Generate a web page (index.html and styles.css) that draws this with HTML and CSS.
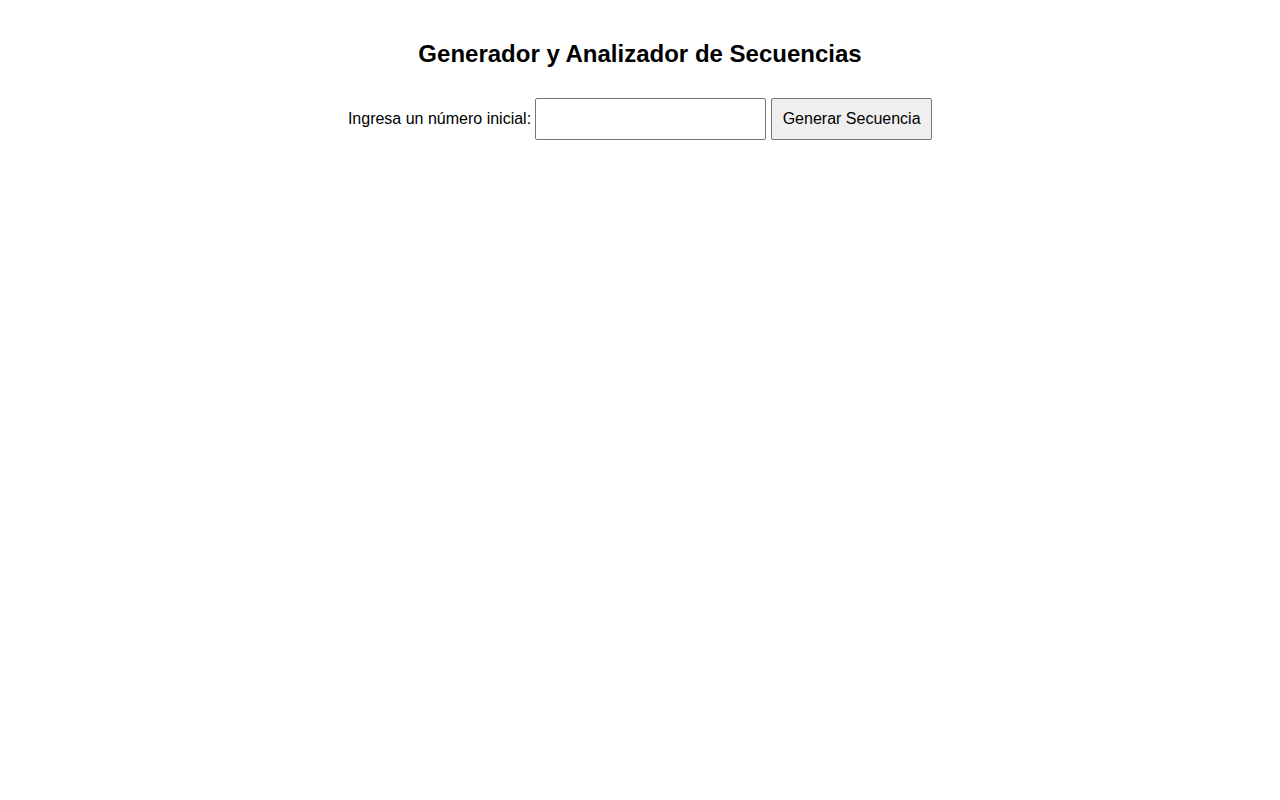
FILE: index.html
```html
<!DOCTYPE html>
<html lang="es">
<head>
<meta charset="utf-8">
<title>Generador y Analizador de Secuencias</title>
<link rel="stylesheet" href="styles.css">
</head>
<body>
<main class="app">
  <h2 class="title">Generador y Analizador de Secuencias</h2>
  <div class="form-row">
    <label class="label" for="num">Ingresa un número inicial:</label>
    <input class="num-input" id="num" type="number">
    <button class="gen-btn" type="button">Generar Secuencia</button>
  </div>
</main>
</body>
</html>
```
FILE: styles.css
```css
html, body {
  margin: 0;
  background: #fff;
}
body {
  font-family: "Liberation Sans", Arial, sans-serif;
  color: #000;
  padding: 20px;
}
.app {
  display: flex;
  flex-direction: column;
  align-items: center;
}
.title {
  font-size: 24px;
  font-weight: bold;
  margin: 20px 0 0;
  line-height: 28px;
}
.form-row {
  margin-top: 30px;
  display: flex;
  align-items: center;
  font-size: 16px;
}
.label {
  margin-right: 4px;
}
.num-input {
  box-sizing: border-box;
  width: 231px;
  height: 42px;
  padding: 10px;
  font-size: 16px;
  font-family: inherit;
  border: 1px solid #767676;
  border-radius: 2px;
  background: #fff;
  margin: 0;
}
.num-input::-webkit-outer-spin-button,
.num-input::-webkit-inner-spin-button {
  -webkit-appearance: none;
  margin: 0;
}
.num-input { -moz-appearance: textfield; }
.gen-btn {
  box-sizing: border-box;
  height: 42px;
  width: 161px;
  margin-left: 5px;
  padding: 0 10px;
  font-size: 16px;
  font-family: inherit;
  color: #000;
  background: #efefef;
  border: 1px solid #767676;
  border-radius: 2px;
}
```
